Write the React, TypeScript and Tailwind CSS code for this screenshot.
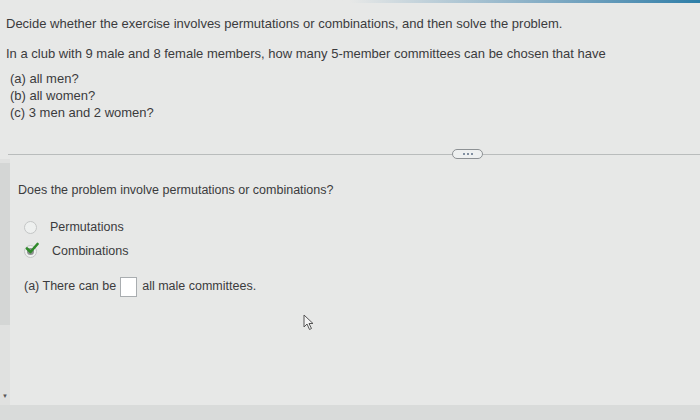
import { useState } from "react"

function Radio({ checked }: { checked?: boolean }) {
  return (
    <span className="relative inline-flex h-[13px] w-[13px] shrink-0 items-center justify-center rounded-full border border-[#c4c6c6] bg-[#eef0ef]">
      {checked && (
        <>
          <span className="h-[7px] w-[7px] rounded-full bg-[#8d9090]" />
          <svg className="absolute -right-[3px] -top-[4px]" width="14" height="12" viewBox="0 0 14 12">
            <path d="M2 6.5 L5.5 10 L12.5 2" fill="none" stroke="#2f8a2a" strokeWidth="2.6" strokeLinecap="round" strokeLinejoin="round" />
          </svg>
        </>
      )}
    </span>
  )
}

export default function App() {
  const [answer, setAnswer] = useState("")
  return (
    <div
      className="relative flex h-[420px] w-[700px] flex-col overflow-hidden bg-[#e7e8e7] text-[13px] text-[#3b3b3d]"
      style={{ fontFamily: '"Liberation Sans", Arial, sans-serif' }}
    >
      <div className="h-[3px] w-full shrink-0 bg-gradient-to-r from-transparent via-[#e7e8e7] to-[#2c7ea8]" />
      <div className="flex flex-1 flex-col">
        <div className="px-[6px] pt-[12px]">
          <p className="leading-[17px]">Decide whether the exercise involves permutations or combinations, and then solve the problem.</p>
          <p className="mt-[13px] leading-[17px]">
            In a club with 9 male and 8 female members, how many 5-member committees can be chosen that have
          </p>
          <div className="mt-[8px] pl-[4px] leading-[17px]">
            <p>(a) all men?</p>
            <p>(b) all women?</p>
            <p>(c) 3 men and 2 women?</p>
          </div>
        </div>

        <div className="mt-[28px] flex items-center pl-[8px]">
          <div className="h-px flex-1 bg-[#b9bcbc]" />
          <span className="flex h-[10px] w-[31px] items-center justify-center gap-[2px] rounded-full border border-[#8d9194] bg-[#eef0f0]">
            <span className="h-[2px] w-[2px] rounded-full bg-[#5c6f86]" />
            <span className="h-[2px] w-[2px] rounded-full bg-[#5c6f86]" />
            <span className="h-[2px] w-[2px] rounded-full bg-[#5c6f86]" />
          </span>
          <div className="h-px w-[217px] bg-[#b9bcbc]" />
        </div>

        <div className="flex flex-1 text-[12.5px]">
          <div className="flex w-[10px] flex-col bg-[#e0e1e0]">
            <div className="mt-[4px] h-[162px] bg-[#d4d6d5]" />
            <div className="flex-1" />
            <span className="mb-[6px] ml-[2px] text-[6px] leading-none text-[#555]">▼</span>
          </div>
          <div className="flex-1 pl-[8px] pt-[23px]">
            <p className="leading-[17px]">Does the problem involve permutations or combinations?</p>
            <div className="mt-[19px] flex flex-col gap-[5px] pl-[6px]">
              <label className="flex items-center gap-[13px]">
                <Radio />
                <span>Permutations</span>
              </label>
              <label className="flex items-center gap-[15px]">
                <Radio checked />
                <span>Combinations</span>
              </label>
            </div>
            <div className="mt-[16px] flex items-center pl-[6px]">
              <span>(a) There can be</span>
              <input
                value={answer}
                onChange={(e) => setAnswer(e.target.value)}
                className="ml-[4px] mr-[5px] h-[20px] w-[17px] border border-[#a9adb0] bg-white outline-none"
              />
              <span>all male committees.</span>
            </div>
            <div className="ml-[285px] mt-[17px]">
              <svg width="12" height="17" viewBox="0 0 12 17">
                <path d="M1 1 L1 13 L4 10 L6.5 15.5 L8.5 14.5 L6 9.5 L10 9.5 Z" fill="#f4f4f4" stroke="#555" strokeWidth="1" strokeLinejoin="round" />
              </svg>
            </div>
          </div>
        </div>
      </div>
      <div className="h-[15px] w-full shrink-0 bg-[#d9dbda]" />
    </div>
  )
}
